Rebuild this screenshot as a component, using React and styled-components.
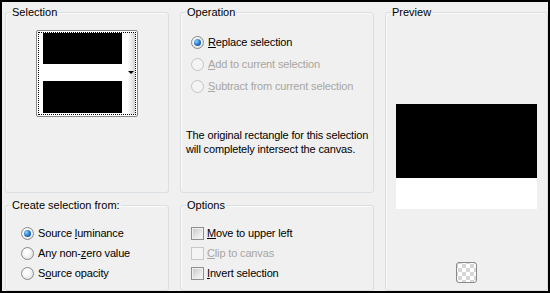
import React from "react";
import styled, { createGlobalStyle, css } from "styled-components";

const Global = createGlobalStyle`
  html, body { margin: 0; padding: 0; background: #000; }
  body { font-family: "Liberation Sans", Arial, sans-serif; font-size: 11px; color: #000; }
  * { box-sizing: border-box; }
`;

const Frame = styled.div`
  width: 550px;
  height: 293px;
  border: 2px solid #000;
  background: #f0f0f0;
  display: grid;
  grid-template-columns: 164px 194px 163px;
  grid-template-rows: 187px 92px;
  column-gap: 11px;
  row-gap: 6px;
  padding: 4px 0 0 3px;
`;

const Group = styled.fieldset`
  margin: 0;
  min-width: 0;
  padding: 0;
  border: 1px solid #d9dfe3;
  border-radius: 3px;
  box-shadow: inset 1px 1px 0 #fafafa;
  display: flex;
  flex-direction: column;
  ${(p) => p.$span && css`grid-row: 1 / span 2; grid-column: 3;`}
  ${(p) => p.$center && css`align-items: center;`}
`;

const Legend = styled.legend`
  font-size: 11px;
  line-height: 13px;
  padding: 0 1px;
  margin-left: 5px;
  color: #000;
`;

const Picker = styled.div`
  margin-top: 11px;
  width: 102px;
  height: 87px;
  border: 1px solid #858585;
  border-radius: 2px;
  padding: 1px;
  background: #fff;
`;

const Focus = styled.div`
  height: 100%;
  border: 1px dotted #000;
  padding: 0 0 0 4px;
  display: flex;
`;

const Bars = styled.div`
  width: 79px;
  display: flex;
  flex-direction: column;
  background: #fff;
`;

const Bar = styled.div`
  height: ${(p) => p.$h}px;
  background: #000;
  margin-bottom: ${(p) => p.$gap || 0}px;
`;

const Strip = styled.div`
  width: 13px;
  background: linear-gradient(to right, #fff 45%, #d4d4d4);
  display: flex;
  align-items: center;
  justify-content: flex-end;
  padding-right: 1px;
  padding-bottom: 2px;
`;

const Arrow = styled.span`
  width: 0;
  height: 0;
  border-left: 3px solid transparent;
  border-right: 3px solid transparent;
  border-top: 3px solid #000;
`;

const List = styled.div`
  display: flex;
  flex-direction: column;
  margin-top: ${(p) => p.$top}px;
  padding-left: ${(p) => p.$left}px;
`;

const Row = styled.div`
  height: ${(p) => p.$h}px;
  display: flex;
  align-items: center;
  gap: ${(p) => p.$gap}px;
  font-size: 11px;
  letter-spacing: -0.15px;
  color: ${(p) => (p.$disabled ? "#a7a6a0" : "#000")};
  white-space: nowrap;
`;

const Radio = styled.span`
  width: 13px;
  height: 13px;
  flex: none;
  border-radius: 50%;
  border: 1px solid ${(p) => (p.$disabled ? "#c4c4c4" : "#8a8a8a")};
  background: ${(p) =>
    p.$disabled
      ? "#f4f4f4"
      : "radial-gradient(circle at 40% 40%, #ffffff 20%, #d8d8d8 100%)"};
  display: flex;
  align-items: center;
  justify-content: center;
  &::after {
    content: "";
    display: ${(p) => (p.$checked ? "block" : "none")};
    width: 7px;
    height: 7px;
    border-radius: 50%;
    background: radial-gradient(circle at 35% 35%, #8fd4ff 0%, #2a78c8 50%, #0d3f80 100%);
  }
`;

const Check = styled.span`
  width: 13px;
  height: 13px;
  flex: none;
  border: 1px solid ${(p) => (p.$disabled ? "#c8c8c8" : "#8e8f8f")};
  background: ${(p) =>
    p.$disabled ? "#f4f4f4" : "linear-gradient(135deg, #c4c4c4 0%, #e8e8e8 60%, #f8f8f8 100%)"};
  box-shadow: inset 0 0 0 1px ${(p) => (p.$disabled ? "#f4f4f4" : "#f0f0f0")};
`;

const Key = styled.u``;

const Note = styled.p`
  margin: 31px 0 0 5px;
  font-size: 11px;
  letter-spacing: -0.15px;
  line-height: 14px;
  white-space: nowrap;
`;

const PreviewImage = styled.div`
  margin-top: 85px;
  width: 141px;
  height: 105px;
  display: flex;
  flex-direction: column;
  background: #fff;
`;

const PreviewBlack = styled.div`
  height: 74px;
  background: #000;
`;

const Checker = styled.div`
  margin-top: 53px;
  width: 21px;
  height: 21px;
  border: 1px solid #8a8a8a;
  border-radius: 3px;
  background-color: #fff;
  background-image: conic-gradient(#d6d6d6 25%, #fff 0 50%, #d6d6d6 0 75%, #fff 0);
  background-size: 8px 8px;
  background-position: 1px 1px;
`;

export default function App() {
  return (
    <>
      <Global />
      <Frame>
        <Group $center>
          <Legend>Selection</Legend>
          <Picker>
            <Focus>
              <Bars>
                <Bar $h={31} $gap={17} />
                <Bar $h={32} />
              </Bars>
              <Strip>
                <Arrow />
              </Strip>
            </Focus>
          </Picker>
        </Group>

        <Group>
          <Legend>Operation</Legend>
          <List $top={12} $left={10}>
            <Row $h={22} $gap={4}>
              <Radio $checked />
              <span><Key>R</Key>eplace selection</span>
            </Row>
            <Row $h={22} $gap={4} $disabled>
              <Radio $disabled />
              <span><Key>A</Key>dd to current selection</span>
            </Row>
            <Row $h={22} $gap={4} $disabled>
              <Radio $disabled />
              <span><Key>S</Key>ubtract from current selection</span>
            </Row>
          </List>
          <Note>
            The original rectangle for this selection
            <br />
            will completely intersect the canvas.
          </Note>
        </Group>

        <Group $span $center>
          <Legend>Preview</Legend>
          <PreviewImage>
            <PreviewBlack />
          </PreviewImage>
          <Checker />
        </Group>

        <Group>
          <Legend>Create selection from:</Legend>
          <List $top={11} $left={15}>
            <Row $h={20} $gap={4}>
              <Radio $checked />
              <span>Source <Key>l</Key>uminance</span>
            </Row>
            <Row $h={20} $gap={4}>
              <Radio />
              <span>Any non-<Key>z</Key>ero value</span>
            </Row>
            <Row $h={20} $gap={4}>
              <Radio />
              <span>S<Key>o</Key>urce opacity</span>
            </Row>
          </List>
        </Group>

        <Group>
          <Legend>Options</Legend>
          <List $top={11} $left={10}>
            <Row $h={20} $gap={3}>
              <Check />
              <span><Key>M</Key>ove to upper left</span>
            </Row>
            <Row $h={20} $gap={3} $disabled>
              <Check $disabled />
              <span><Key>C</Key>lip to canvas</span>
            </Row>
            <Row $h={20} $gap={3}>
              <Check />
              <span><Key>I</Key>nvert selection</span>
            </Row>
          </List>
        </Group>
      </Frame>
    </>
  );
}
